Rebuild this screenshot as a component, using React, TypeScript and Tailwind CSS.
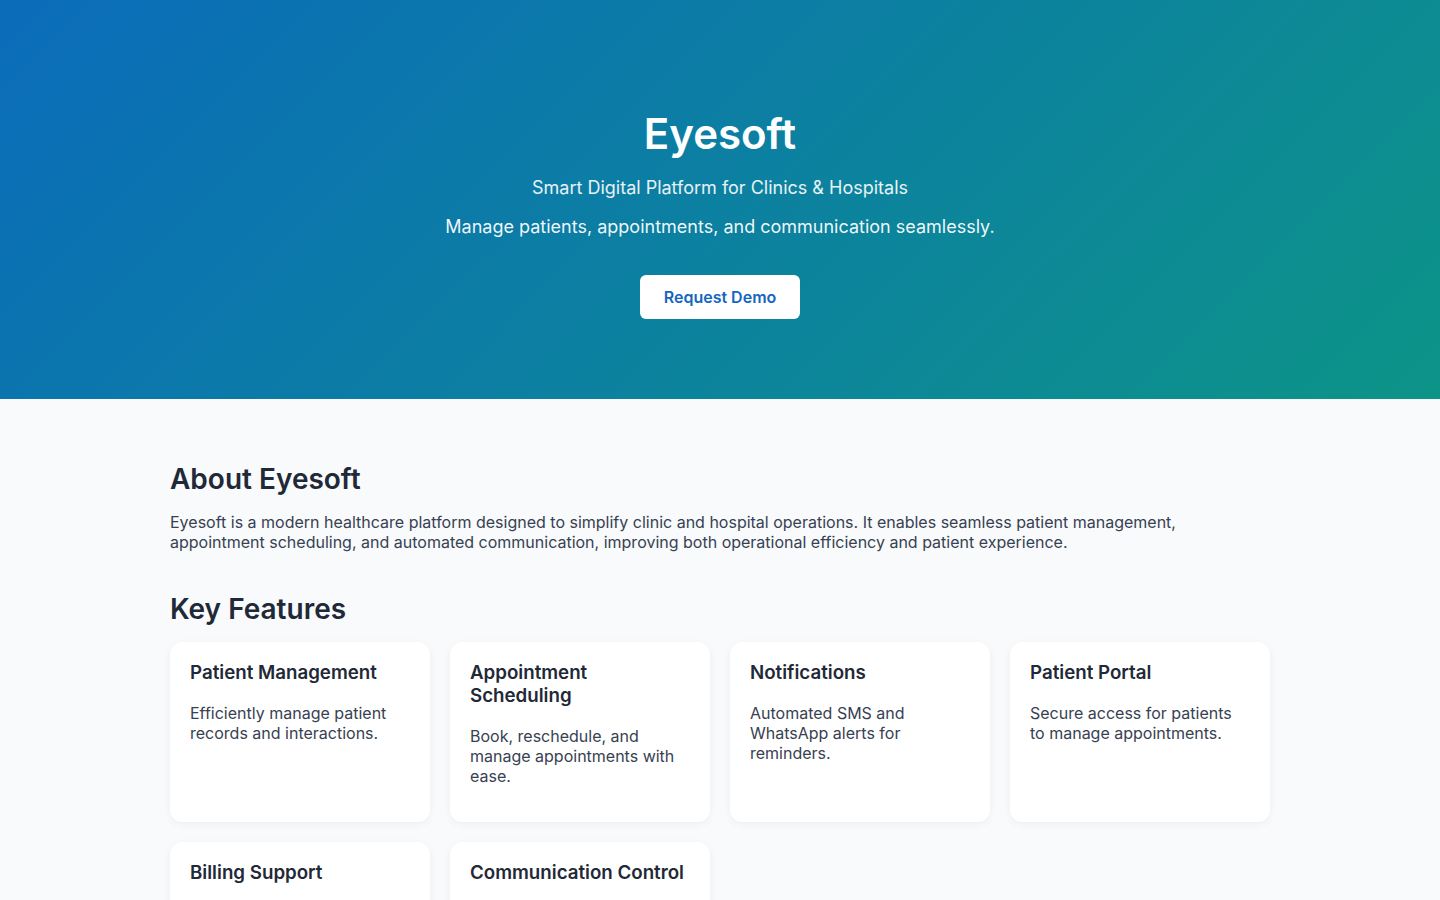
import React from "react";

const features = [
  { title: "Patient Management", desc: "Efficiently manage patient records and interactions." },
  { title: "Appointment Scheduling", desc: "Book, reschedule, and manage appointments with ease." },
  { title: "Notifications", desc: "Automated SMS and WhatsApp alerts for reminders." },
  { title: "Patient Portal", desc: "Secure access for patients to manage appointments." },
  { title: "Billing Support", desc: "Simplified billing and payment tracking for clinics." },
  { title: "Communication Control", desc: "Manage all patient communication from one place." },
];

export default function App() {
  return (
    <div className="min-h-screen bg-[#f8fafc] font-['Inter',sans-serif]">
      <header className="h-[399px] bg-[linear-gradient(135deg,#0b6cba,#0d9488)] text-white flex flex-col items-center pt-[105px]">
        <h1 className="text-[42px] leading-[58px] font-semibold">Eyesoft</h1>
        <p className="mt-[13px] text-lg leading-6 text-white/90">Smart Digital Platform for Clinics &amp; Hospitals</p>
        <p className="mt-[15px] text-lg leading-6 text-white/95">Manage patients, appointments, and communication seamlessly.</p>
        <button className="mt-[36px] w-[160px] h-[44px] bg-white rounded-md text-[#1565c0] text-base font-semibold">Request Demo</button>
      </header>
      <main className="w-[1100px] mx-auto pt-[63px]">
        <h2 className="text-[28px] leading-[34px] font-semibold text-[#1f2937]">About Eyesoft</h2>
        <p className="mt-[16px] text-base leading-5 text-[#374151]">
          Eyesoft is a modern healthcare platform designed to simplify clinic and hospital operations. It enables seamless patient management, appointment scheduling, and automated communication, improving both operational efficiency and patient experience.
        </p>
        <h2 className="mt-[40px] text-[28px] leading-[34px] font-semibold text-[#1f2937]">Key Features</h2>
        <div className="mt-[16px] grid grid-cols-4 gap-5 pb-10">
          {features.map((f) => (
            <div key={f.title} className="bg-white rounded-xl shadow-[0_2px_8px_rgba(0,0,0,0.05)] px-5 pt-[19px] pb-5 min-h-[180px]">
              <h3 className="text-[18.72px] leading-[23px] font-semibold text-[#1f2937]">{f.title}</h3>
              <p className="mt-[19px] text-base leading-5 text-[#374151]">{f.desc}</p>
            </div>
          ))}
        </div>
      </main>
    </div>
  );
}
